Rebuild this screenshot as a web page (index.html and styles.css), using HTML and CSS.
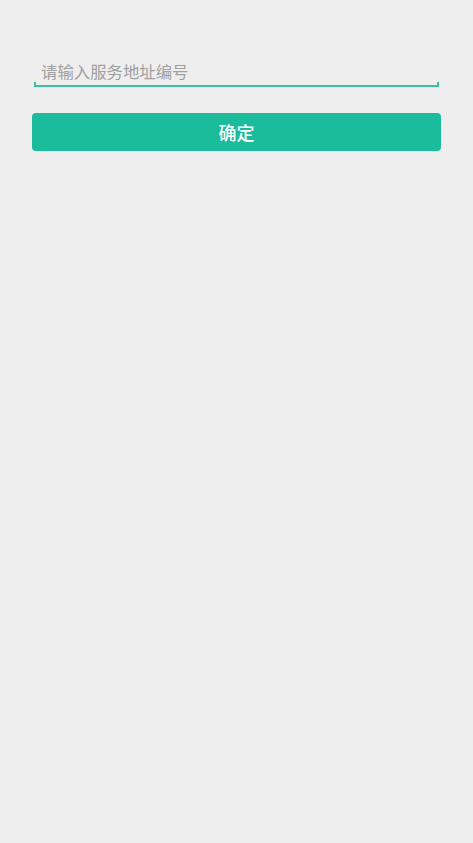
FILE: index.html
```html
<!DOCTYPE html>
<html lang="zh-CN">
<head>
<meta charset="utf-8">
<title>服务地址</title>
<link rel="stylesheet" href="styles.css">
</head>
<body>
<main class="page">
  <div class="field">
    <input class="field-input" type="text" placeholder="请输入服务地址编号">
  </div>
  <button class="btn-primary" type="button">确定</button>
</main>
</body>
</html>
```
FILE: styles.css
```css
html, body {
  margin: 0;
  padding: 0;
  background: #eeeeee;
  height: 100%;
}

.page {
  display: flex;
  flex-direction: column;
  padding: 58px 32px 0;
  font-family: "Noto Sans CJK SC", "Noto Sans", sans-serif;
}

.field {
  position: relative;
  margin: 0 2px;
  border-bottom: 2px solid #3cc0a2;
}

.field::before,
.field::after {
  content: "";
  position: absolute;
  bottom: 0;
  width: 2px;
  height: 3px;
  background: #3cc0a2;
}

.field::before { left: 0; }
.field::after { right: 0; }

.field-input {
  display: block;
  box-sizing: border-box;
  width: 100%;
  height: 27px;
  margin: 0;
  padding: 0 0 1px 7px;
  border: none;
  outline: none;
  background: transparent;
  font-family: "Noto Sans CJK SC", "Noto Sans", sans-serif;
  font-size: 16.4px;
  color: #333333;
}

.field-input::placeholder {
  color: #a0a0a0;
}

.btn-primary {
  margin-top: 26px;
  height: 38px;
  border: none;
  border-radius: 4px;
  background: #1abc9c;
  color: #ffffff;
  font-family: "Noto Sans CJK SC", "Noto Sans", sans-serif;
  font-size: 18px;
  font-weight: 500;
  padding: 0;
}
```
